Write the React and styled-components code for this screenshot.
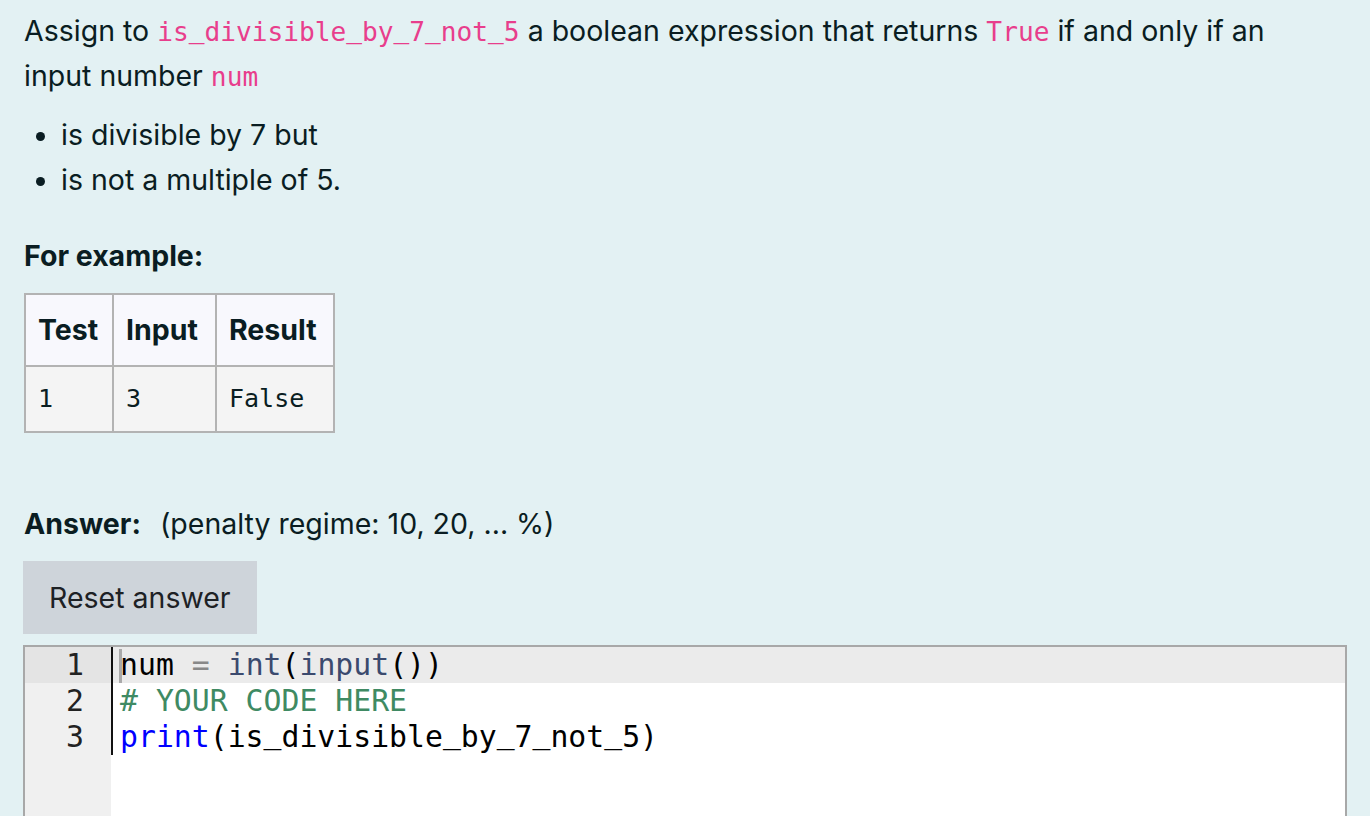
import React from "react";
import styled, { createGlobalStyle } from "styled-components";

const Global = createGlobalStyle`
  html, body { margin: 0; padding: 0; background: #e3f1f3; }
  body { font-family: Inter, "Noto Sans", sans-serif; color: #0a1d22; }
`;

const Page = styled.div`
  padding: 8px 24px 0 24px;
  width: 1290px;
  font-size: 28.5px;
  line-height: 45px;
`;

const Para = styled.p`
  margin: 0 0 14px 0;
`;

const InlineCode = styled.code`
  font-family: "DejaVu Sans Mono", monospace;
  font-size: 26.2px;
  line-height: 1;
  color: #e83e8c;
`;

const Under = styled.span`
  font-family: "Liberation Mono", monospace;
`;

const mono = (s) =>
  s.split(/(_)/).map((part, i) =>
    part === "_" ? <Under key={i}>_</Under> : <React.Fragment key={i}>{part}</React.Fragment>
  );

const List = styled.ul`
  margin: 0 0 31px 0;
  padding-left: 37px;
  li { padding-left: 0; }
`;

const Heading = styled.div`
  font-weight: 700;
  margin-bottom: 15px;
`;

const Table = styled.table`
  border-collapse: collapse;
  table-layout: fixed;
  margin-bottom: 68px;
`;

const Th = styled.th`
  border: 2px solid #b3b3b3;
  background: #f8f8fd;
  text-align: left;
  font-weight: 700;
  padding: 13px 12px;
  line-height: 44px;
  white-space: nowrap;
  width: ${(p) => p.$w}px;
`;

const Td = styled.td`
  border: 2px solid #b3b3b3;
  background: #f4f4f4;
  padding: 10px 12px;
  font-family: "DejaVu Sans Mono", monospace;
  font-size: 25px;
  line-height: 44px;
`;

const AnswerRow = styled.div`
  display: flex;
  gap: 19px;
  margin-bottom: 15px;
`;

const Bold = styled.span`
  font-weight: 700;
`;

const Button = styled.button`
  font-family: Inter, "Noto Sans", sans-serif;
  font-size: 28.5px;
  color: #1d2125;
  background: #ced4da;
  border: none;
  border-radius: 0;
  padding: 0 26px;
  height: 73px;
  display: block;
  margin: 0 0 11px -1px;
`;

const Editor = styled.div`
  border: 2px solid #a8a8a8;
  border-bottom: none;
  margin-left: -1px;
  width: 1320px;
  height: 200px;
  background: #fff;
  display: grid;
  grid-template-columns: 86px 1fr;
  font-family: "DejaVu Sans Mono", monospace;
  font-size: 29.8px;
  line-height: 36px;
`;

const Gutter = styled.div`
  background: #f0f0f0;
`;

const LineNo = styled.div`
  text-align: right;
  padding-right: 27px;
  height: 36px;
  background: ${(p) => (p.$active ? "#e4e4e4" : "transparent")};
  color: #222;
`;

const Lines = styled.div``;

const Line = styled.div`
  height: 36px;
  border-left: 2px solid #111;
  padding-left: 7px;
  white-space: pre;
  background: ${(p) => (p.$active ? "#ebebeb" : "transparent")};
  position: relative;
`;

const Cursor = styled.span`
  position: absolute;
  left: 6px;
  top: 2px;
  width: 3px;
  height: 34px;
  background: #aaa;
`;

const Tok = styled.span`
  color: ${(p) => p.$c};
`;

export default function App() {
  return (
    <>
      <Global />
      <Page>
        <Para>
          Assign to <InlineCode>{mono("is_divisible_by_7_not_5")}</InlineCode> a boolean
          expression that returns <InlineCode>True</InlineCode> if and only if an
          input number <InlineCode>num</InlineCode>
        </Para>
        <List>
          <li>is divisible by 7 but</li>
          <li>is not a multiple of 5.</li>
        </List>
        <Heading>For example:</Heading>
        <Table>
          <thead>
            <tr>
              <Th $w={62}>Test</Th>
              <Th $w={77}>Input</Th>
              <Th $w={92}>Result</Th>
            </tr>
          </thead>
          <tbody>
            <tr>
              <Td>1</Td>
              <Td>3</Td>
              <Td>False</Td>
            </tr>
          </tbody>
        </Table>
        <AnswerRow>
          <Bold>Answer:</Bold>
          <span>(penalty regime: 10, 20, ... %)</span>
        </AnswerRow>
        <Button>Reset answer</Button>
        <Editor>
          <Gutter>
            <LineNo $active>1</LineNo>
            <LineNo>2</LineNo>
            <LineNo>3</LineNo>
          </Gutter>
          <Lines>
            <Line $active>
              <Cursor />
              <Tok $c="#000">num</Tok> <Tok $c="#888">=</Tok>{" "}
              <Tok $c="#3b4a6e">int</Tok>
              <Tok $c="#000">(</Tok>
              <Tok $c="#3b4a6e">input</Tok>
              <Tok $c="#000">())</Tok>
            </Line>
            <Line>
              <Tok $c="#3f8a63"># YOUR CODE HERE</Tok>
            </Line>
            <Line>
              <Tok $c="#0000ff">print</Tok>
              <Tok $c="#000">({mono("is_divisible_by_7_not_5")})</Tok>
            </Line>
          </Lines>
        </Editor>
      </Page>
    </>
  );
}
